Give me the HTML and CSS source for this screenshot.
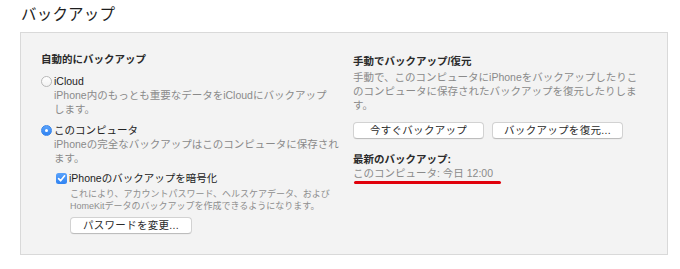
FILE: index.html
```html
<!DOCTYPE html>
<html lang="ja">
<head>
    <meta charset="UTF-8">
    <meta name="viewport" content="width=device-width, initial-scale=1.0">
    <title>バックアップ</title>
    <link rel="stylesheet" href="styles.css">
</head>
<body>

<h1 class="page-title">バックアップ</h1>

<div class="panel">
    <div class="col-left">
        <div class="heading">自動的にバックアップ</div>

        <div class="option first">
            <span class="radio"></span>
            <span>iCloud</span>
        </div>
        <p class="desc">iPhone内のもっとも重要なデータをiCloudにバックアップ<br>します。</p>

        <div class="option">
            <span class="radio checked"></span>
            <span>このコンピュータ</span>
        </div>
        <p class="desc">iPhoneの完全なバックアップはこのコンピュータに保存され<br>ます。</p>

        <div class="option encrypt">
            <span class="checkbox">
                <svg width="11" height="11" viewBox="0 0 11 11"><path d="M2.6 5.6 L4.6 7.8 L8.6 2.8" fill="none" stroke="#fff" stroke-width="1.6" stroke-linecap="round" stroke-linejoin="round"/></svg>
            </span>
            <span>iPhoneのバックアップを暗号化</span>
        </div>
        <p class="small">これにより、アカウントパスワード、ヘルスケアデータ、および<br>HomeKitデータのバックアップを作成できるようになります。</p>

        <button class="btn btn-password">パスワードを変更...</button>
    </div>

    <div class="col-right">
        <div class="heading">手動でバックアップ/復元</div>
        <p class="desc manual">手動で、このコンピュータにiPhoneをバックアップしたりこ<br>のコンピュータに保存されたバックアップを復元したりしま<br>す。</p>

        <div class="btn-row">
            <button class="btn">今すぐバックアップ</button>
            <button class="btn">バックアップを復元...</button>
        </div>

        <div class="heading latest">最新のバックアップ:</div>
        <div class="latest-value">このコンピュータ: 今日 12:00</div>
        <div class="mark"></div>
    </div>
</div>

</body>
</html>
```

FILE: styles.css
```css
* {
    box-sizing: border-box;
}
body {
    margin: 0;
    background: #fff;
    font-family: "Liberation Sans", "Noto Sans CJK JP", sans-serif;
    color: #222;
}
.page-title {
    margin: 0;
    height: 32px;
    padding: 5px 0 0 21px;
    font-size: 15.5px;
    font-weight: normal;
    line-height: 20px;
    letter-spacing: 0.2px;
    color: #1e1e1e;
}
.panel {
    display: flex;
    margin-left: 20px;
    width: 648px;
    height: 223px;
    padding: 19px 0 0 20px;
    background: #f3f3f3;
    border: 1px solid #d9d9d9;
}
.col-left {
    width: 312px;
}
.col-right {
    flex: 1;
    padding-top: 2px;
}
.heading {
    font-size: 10.5px;
    font-weight: bold;
    line-height: 14px;
    color: #2a2a2a;
    white-space: nowrap;
}
.option {
    display: flex;
    align-items: center;
    margin-top: 7px;
    font-size: 10.5px;
    line-height: 14px;
    color: #222;
    white-space: nowrap;
}
.option.first {
    margin-top: 8px;
}
.option.encrypt {
    margin-top: 6px;
    padding-left: 15px;
}
.radio {
    position: relative;
    width: 11px;
    height: 11px;
    margin-right: 2px;
    border-radius: 50%;
    border: 1px solid #b8b8b8;
    background: linear-gradient(#fff, #f2f2f2);
}
.radio.checked {
    border-color: #3a86ea;
    background: linear-gradient(#5aa2fb, #2f83f2);
}
.radio.checked::after {
    content: "";
    position: absolute;
    left: 3px;
    top: 3px;
    width: 3px;
    height: 3px;
    border-radius: 50%;
    background: #fff;
}
.checkbox {
    width: 11px;
    height: 11px;
    margin-right: 2px;
    border-radius: 2.5px;
    background: linear-gradient(#5aa2fb, #2f83f2);
}
.checkbox svg {
    display: block;
}
.desc {
    margin: 0;
    padding-left: 13px;
    font-size: 10.5px;
    line-height: 14px;
    color: #8a8a8a;
    white-space: nowrap;
}
.desc.manual {
    margin-top: 2px;
    padding-left: 0;
}
.small {
    margin: 3px 0 0;
    padding-left: 29px;
    font-size: 9px;
    line-height: 12px;
    color: #8e8e8e;
    white-space: nowrap;
}
.btn {
    display: block;
    height: 17px;
    padding: 0;
    font-family: inherit;
    font-size: 10.5px;
    line-height: 15px;
    color: #2a2a2a;
    background: #fff;
    border: 1px solid #d2d2d2;
    border-bottom-color: #bdbdbd;
    border-radius: 4px;
    box-shadow: 0 0.5px 0.5px rgba(0, 0, 0, 0.05);
    letter-spacing: 0.3px;
}
.btn-password {
    margin: 5px 0 0 29px;
    width: 122px;
}
.btn-row {
    display: flex;
    gap: 8px;
    margin-top: 10px;
}
.btn-row .btn {
    width: 131px;
}
.latest {
    margin-top: 13px;
}
.latest-value {
    font-size: 10.5px;
    line-height: 14px;
    color: #8a8a8a;
    white-space: nowrap;
}
.mark {
    margin: 1px 0 0 1px;
    width: 147px;
    height: 3px;
    border-radius: 2px;
    background: #e0000b;
}
```
